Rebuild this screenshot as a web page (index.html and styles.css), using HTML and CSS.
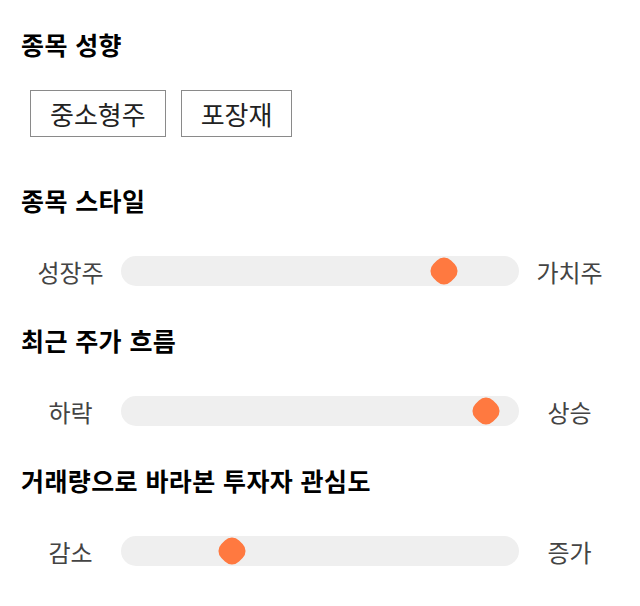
FILE: index.html
```html
<!DOCTYPE html>
<html lang="ko">
<head>
<meta charset="utf-8">
<link rel="stylesheet" href="styles.css">
</head>
<body>
<div class="page">
  <section class="group group-first">
    <h2 class="title">종목 성향</h2>
    <div class="tags">
      <span class="tag">중소형주</span>
      <span class="tag">포장재</span>
    </div>
  </section>
  <section class="group">
    <h2 class="title">종목 스타일</h2>
    <div class="slider-row">
      <span class="label">성장주</span>
      <div class="track"><span class="thumb" style="left: 81.2%"></span></div>
      <span class="label">가치주</span>
    </div>
  </section>
  <section class="group">
    <h2 class="title">최근 주가 흐름</h2>
    <div class="slider-row">
      <span class="label">하락</span>
      <div class="track"><span class="thumb" style="left: 91.7%"></span></div>
      <span class="label">상승</span>
    </div>
  </section>
  <section class="group">
    <h2 class="title">거래량으로 바라본 투자자 관심도</h2>
    <div class="slider-row">
      <span class="label">감소</span>
      <div class="track"><span class="thumb" style="left: 27.9%"></span></div>
      <span class="label">증가</span>
    </div>
  </section>
</div>
</body>
</html>
```

FILE: styles.css
```css
* { box-sizing: border-box; }
html, body { margin: 0; padding: 0; background: #fff; }
body {
  font-family: "Noto Sans CJK KR", "Noto Sans", sans-serif;
  color: #111;
}
.page {
  width: 640px;
  padding: 29px 20px 0 20px;
  display: flex;
  flex-direction: column;
}
.group {
  display: flex;
  flex-direction: column;
  gap: 41px;
  margin-top: 39px;
}
.group-first { margin-top: 0; gap: 31px; }
.group-first + .group { margin-top: 48px; }
.title {
  margin: 0;
  font-size: 25px;
  line-height: 30px;
  font-weight: 700;
  letter-spacing: 0.4px;
  color: #000;
  padding-left: 1px;
}
.tags {
  display: flex;
  gap: 15px;
  padding-left: 10px;
}
.tag {
  display: inline-flex;
  align-items: center;
  height: 47px;
  padding: 0 19px;
  border: 1px solid #8a8a8a;
  font-size: 26px;
  color: #222;
}
.slider-row {
  display: flex;
  align-items: center;
  height: 30px;
}
.label {
  width: 101px;
  text-align: center;
  font-size: 24px;
  color: #444;
  flex: none;
}
.track {
  position: relative;
  width: 398px;
  height: 30px;
  background: #efefef;
  border-radius: 15px;
  flex: none;
}
.thumb {
  position: absolute;
  top: 50%;
  width: 25px;
  height: 25px;
  background: #ff7940;
  border-radius: 10px;
  transform: translate(-50%, -50%) rotate(45deg);
}
```
